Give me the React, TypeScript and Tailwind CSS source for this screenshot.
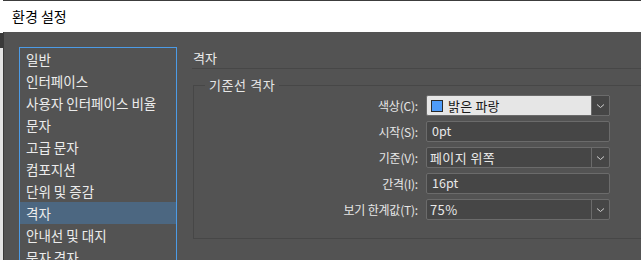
import React from "react";

const font = { fontFamily: '"Noto Sans CJK KR", "Noto Sans", sans-serif' };

const navItems = [
    "일반",
    "인터페이스",
    "사용자 인터페이스 비율",
    "문자",
    "고급 문자",
    "컴포지션",
    "단위 및 증감",
    "격자",
    "안내선 및 대지",
    "문자 격자",
];

function Chevron() {
    return (
        <svg width="9" height="6" viewBox="0 0 9 6" fill="none">
            <path d="M1 1.5 L4.5 4.5 L8 1.5" stroke="#d0d0d0" strokeWidth="1" />
        </svg>
    );
}

function Row({ label, children }: { label: string; children: React.ReactNode }) {
    return (
        <div className="flex items-center h-[21px]">
            <div className="w-[225px] text-right pr-[1px] text-[12px] text-[#e6e6e6] tracking-[-0.2px]">
                {label}
            </div>
            <div className="ml-[7px] w-[184px] h-full">{children}</div>
        </div>
    );
}

function TextBox({ value }: { value: string }) {
    return (
        <div className="h-full rounded-[2px] border border-[#6b6b6b] bg-[#464646] pl-[5px] flex items-center text-[12.5px] text-[#e8e8e8]">
            {value}
        </div>
    );
}

function Combo({ value }: { value: string }) {
    return (
        <div className="h-full rounded-[2px] border border-[#6b6b6b] bg-[#464646] flex text-[13px] text-[#e8e8e8]">
            <div className="flex-1 flex items-center pl-[3px] tracking-[0.4px]">{value}</div>
            <div className="w-[18px] border-l border-[#6b6b6b] flex items-center justify-center">
                <Chevron />
            </div>
        </div>
    );
}

export default function App() {
    return (
        <div className="w-[641px] h-[260px] overflow-hidden flex bg-[#535353]" style={font}>
            {/* background window peeking out on the left */}
            <div className="w-[3px] shrink-0 flex flex-col">
                <div className="h-[33px] shrink-0 bg-white" />
                <div className="h-[15px] shrink-0 bg-[#3a3a3a]" />
                <div className="flex-1 bg-[#e4e4e4]" />
            </div>

            <div className="flex-1 flex flex-col min-h-0">
                {/* Title bar */}
                <div className="h-[32px] shrink-0 bg-white border-t border-[#3c3c3c] flex items-center pl-[9px] text-[14px] text-black">
                    환경 설정
                </div>

                {/* Body */}
                <div className="flex-1 min-h-0 flex pt-[15px] pl-[15px] border-l border-[#3a3a3a]">
                    {/* Category list */}
                    <div className="w-[158px] h-[240px] shrink-0 border border-[#4c9be6]">
                        {navItems.map((item) => (
                            <div
                                key={item}
                                className={`h-[22px] flex items-center pl-[6px] text-[13.5px] text-[#ececec] ${
                                    item === "격자" ? "bg-[#4c6781]" : ""
                                }`}
                            >
                                {item}
                            </div>
                        ))}
                    </div>

                    {/* Settings panel */}
                    <div className="ml-[15px] flex-1 pt-[1px]">
                        <div className="h-[21px] border-b border-[#474747] flex items-center pl-[1px] text-[13px] text-[#ececec]">
                            격자
                        </div>

                        <div className="relative mt-[16px] ml-[1px] w-[460px] border border-[#474747] pt-[9px] pb-[18px]">
                            <div className="absolute -top-[11px] left-[11px] px-[4px] bg-[#535353] text-[13px] text-[#e6e6e6] tracking-[0.6px]">
                                기준선 격자
                            </div>
                            <div className="flex flex-col gap-[5px]">
                                <Row label="색상(C):">
                                    <div className="h-full rounded-[2px] border border-[#6b6b6b] bg-[#e6e6e6] flex text-[13px] text-[#1a1a1a]">
                                        <div className="flex-1 flex items-center pl-[4px] gap-[5px] tracking-[0.2px]">
                                            <span className="w-[12px] h-[12px] bg-[#4f9cf9] border border-[#2a2a2a]" />
                                            밝은 파랑
                                        </div>
                                        <div className="w-[18px] bg-[#464646] border-l border-[#6b6b6b] flex items-center justify-center">
                                            <Chevron />
                                        </div>
                                    </div>
                                </Row>
                                <Row label="시작(S):">
                                    <TextBox value="0pt" />
                                </Row>
                                <Row label="기준(V):">
                                    <Combo value="페이지 위쪽" />
                                </Row>
                                <Row label="간격(I):">
                                    <TextBox value="16pt" />
                                </Row>
                                <Row label="보기 한계값(T):">
                                    <Combo value="75%" />
                                </Row>
                            </div>
                        </div>
                    </div>
                </div>
            </div>
        </div>
    );
}
